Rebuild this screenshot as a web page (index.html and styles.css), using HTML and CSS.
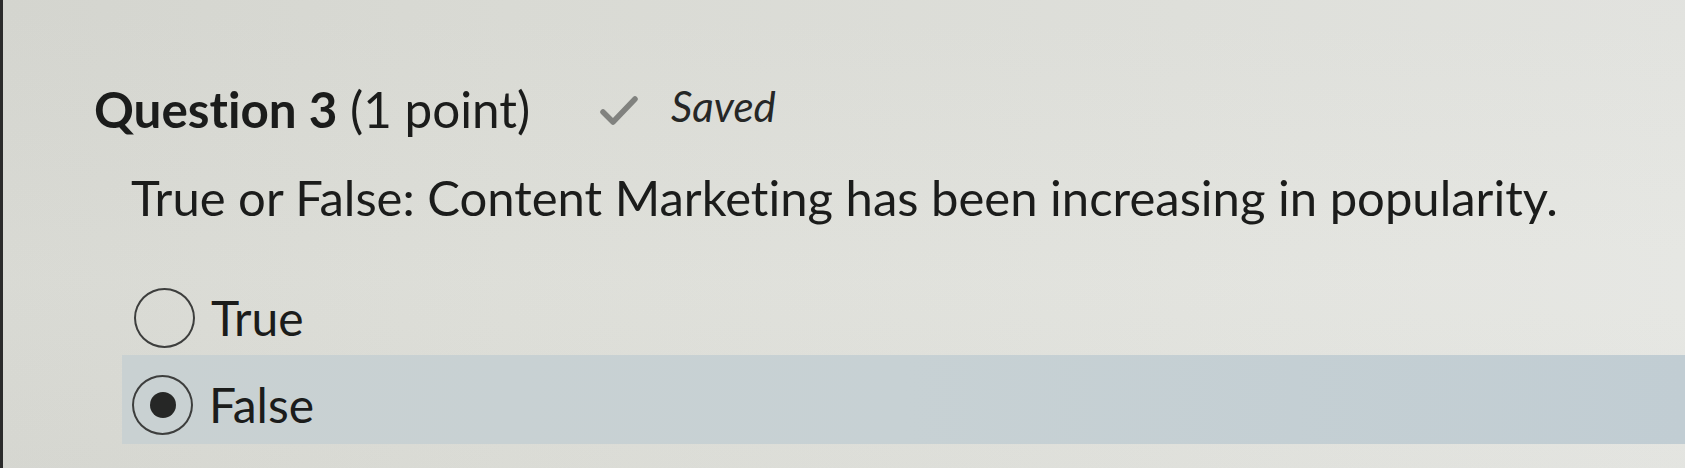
FILE: index.html
```html
<!DOCTYPE html>
<html lang="en">
<head>
<meta charset="utf-8">
<title>Question 3</title>
<link rel="stylesheet" href="styles.css">
</head>
<body>
<div class="screen">
  <div class="question">
    <div class="head">
      <h2 class="title"><strong>Question 3</strong> (1 point)</h2>
      <span class="status">
        <svg class="check" width="40" height="31" viewBox="0 0 40 31" aria-hidden="true">
          <polyline points="4,17 14,27 36,4" fill="none" stroke="#81827f" stroke-width="5.5" stroke-linecap="round" stroke-linejoin="round"/>
        </svg>
        <em class="saved">Saved</em>
      </span>
    </div>
    <p class="prompt">True or False: Content Marketing has been increasing in popularity.</p>
    <div class="options">
      <label class="opt"><span class="radio"></span><span class="opt-text">True</span></label>
      <label class="opt selected"><span class="radio checked"></span><span class="opt-text">False</span></label>
    </div>
  </div>
</div>
</body>
</html>
```
FILE: styles.css
```css
html, body {
  margin: 0;
  padding: 0;
}
body {
  width: 1685px;
  height: 468px;
  overflow: hidden;
  font-family: Lato, "Open Sans", sans-serif;
  font-variant-ligatures: none;
  color: #1b1c1b;
}
.screen {
  box-sizing: border-box;
  width: 1685px;
  height: 468px;
  border-left: 3px solid #2b2b2b;
  background:
    linear-gradient(180deg, rgba(0,0,0,0.02) 0%, rgba(255,255,255,0.02) 60%, rgba(0,0,0,0.01) 100%),
    linear-gradient(90deg, #d8d9d3 0%, #dddeD8 30%, #e2e3de 70%, #e6e7e3 100%);
}
.question {
  padding: 80px 0 0 91px;
}
.head {
  display: flex;
  align-items: center;
  height: 58px;
}
.title {
  margin: 0;
  font-size: 49.4px;
  line-height: 58px;
  font-weight: 400;
}
.title strong {
  font-weight: 700;
}
.status {
  display: flex;
  align-items: center;
  margin-left: 69px;
}
.check {
  display: block;
  margin-top: 2px;
}
.saved {
  margin-left: 32px;
  font-size: 42px;
  line-height: 58px;
  color: #262726;
  font-style: italic;
  margin-top: -6px;
}
.prompt {
  margin: 30px 0 0 37px;
  font-size: 49px;
  line-height: 58px;
}
.options {
  margin: 40px 0 0 28px;
}
.opt {
  display: flex;
  align-items: center;
  padding: 22px 12px 8px;
  font-size: 48px;
  line-height: 58px;
}
.opt.selected {
  background: linear-gradient(90deg, #c9d1d2 0%, #c7d1d4 50%, #c1cdd3 100%);
  padding: 20px 12px 9px 10px;
  margin-top: -1px;
}
.radio {
  box-sizing: border-box;
  width: 61px;
  height: 60px;
  border: 2.5px solid #3d3e3d;
  border-radius: 50%;
  display: flex;
  align-items: center;
  justify-content: center;
  flex: none;
}
.radio.checked::after {
  content: "";
  width: 26px;
  height: 26px;
  border-radius: 50%;
  background: #262726;
}
.opt-text {
  margin-left: 16px;
}
```
